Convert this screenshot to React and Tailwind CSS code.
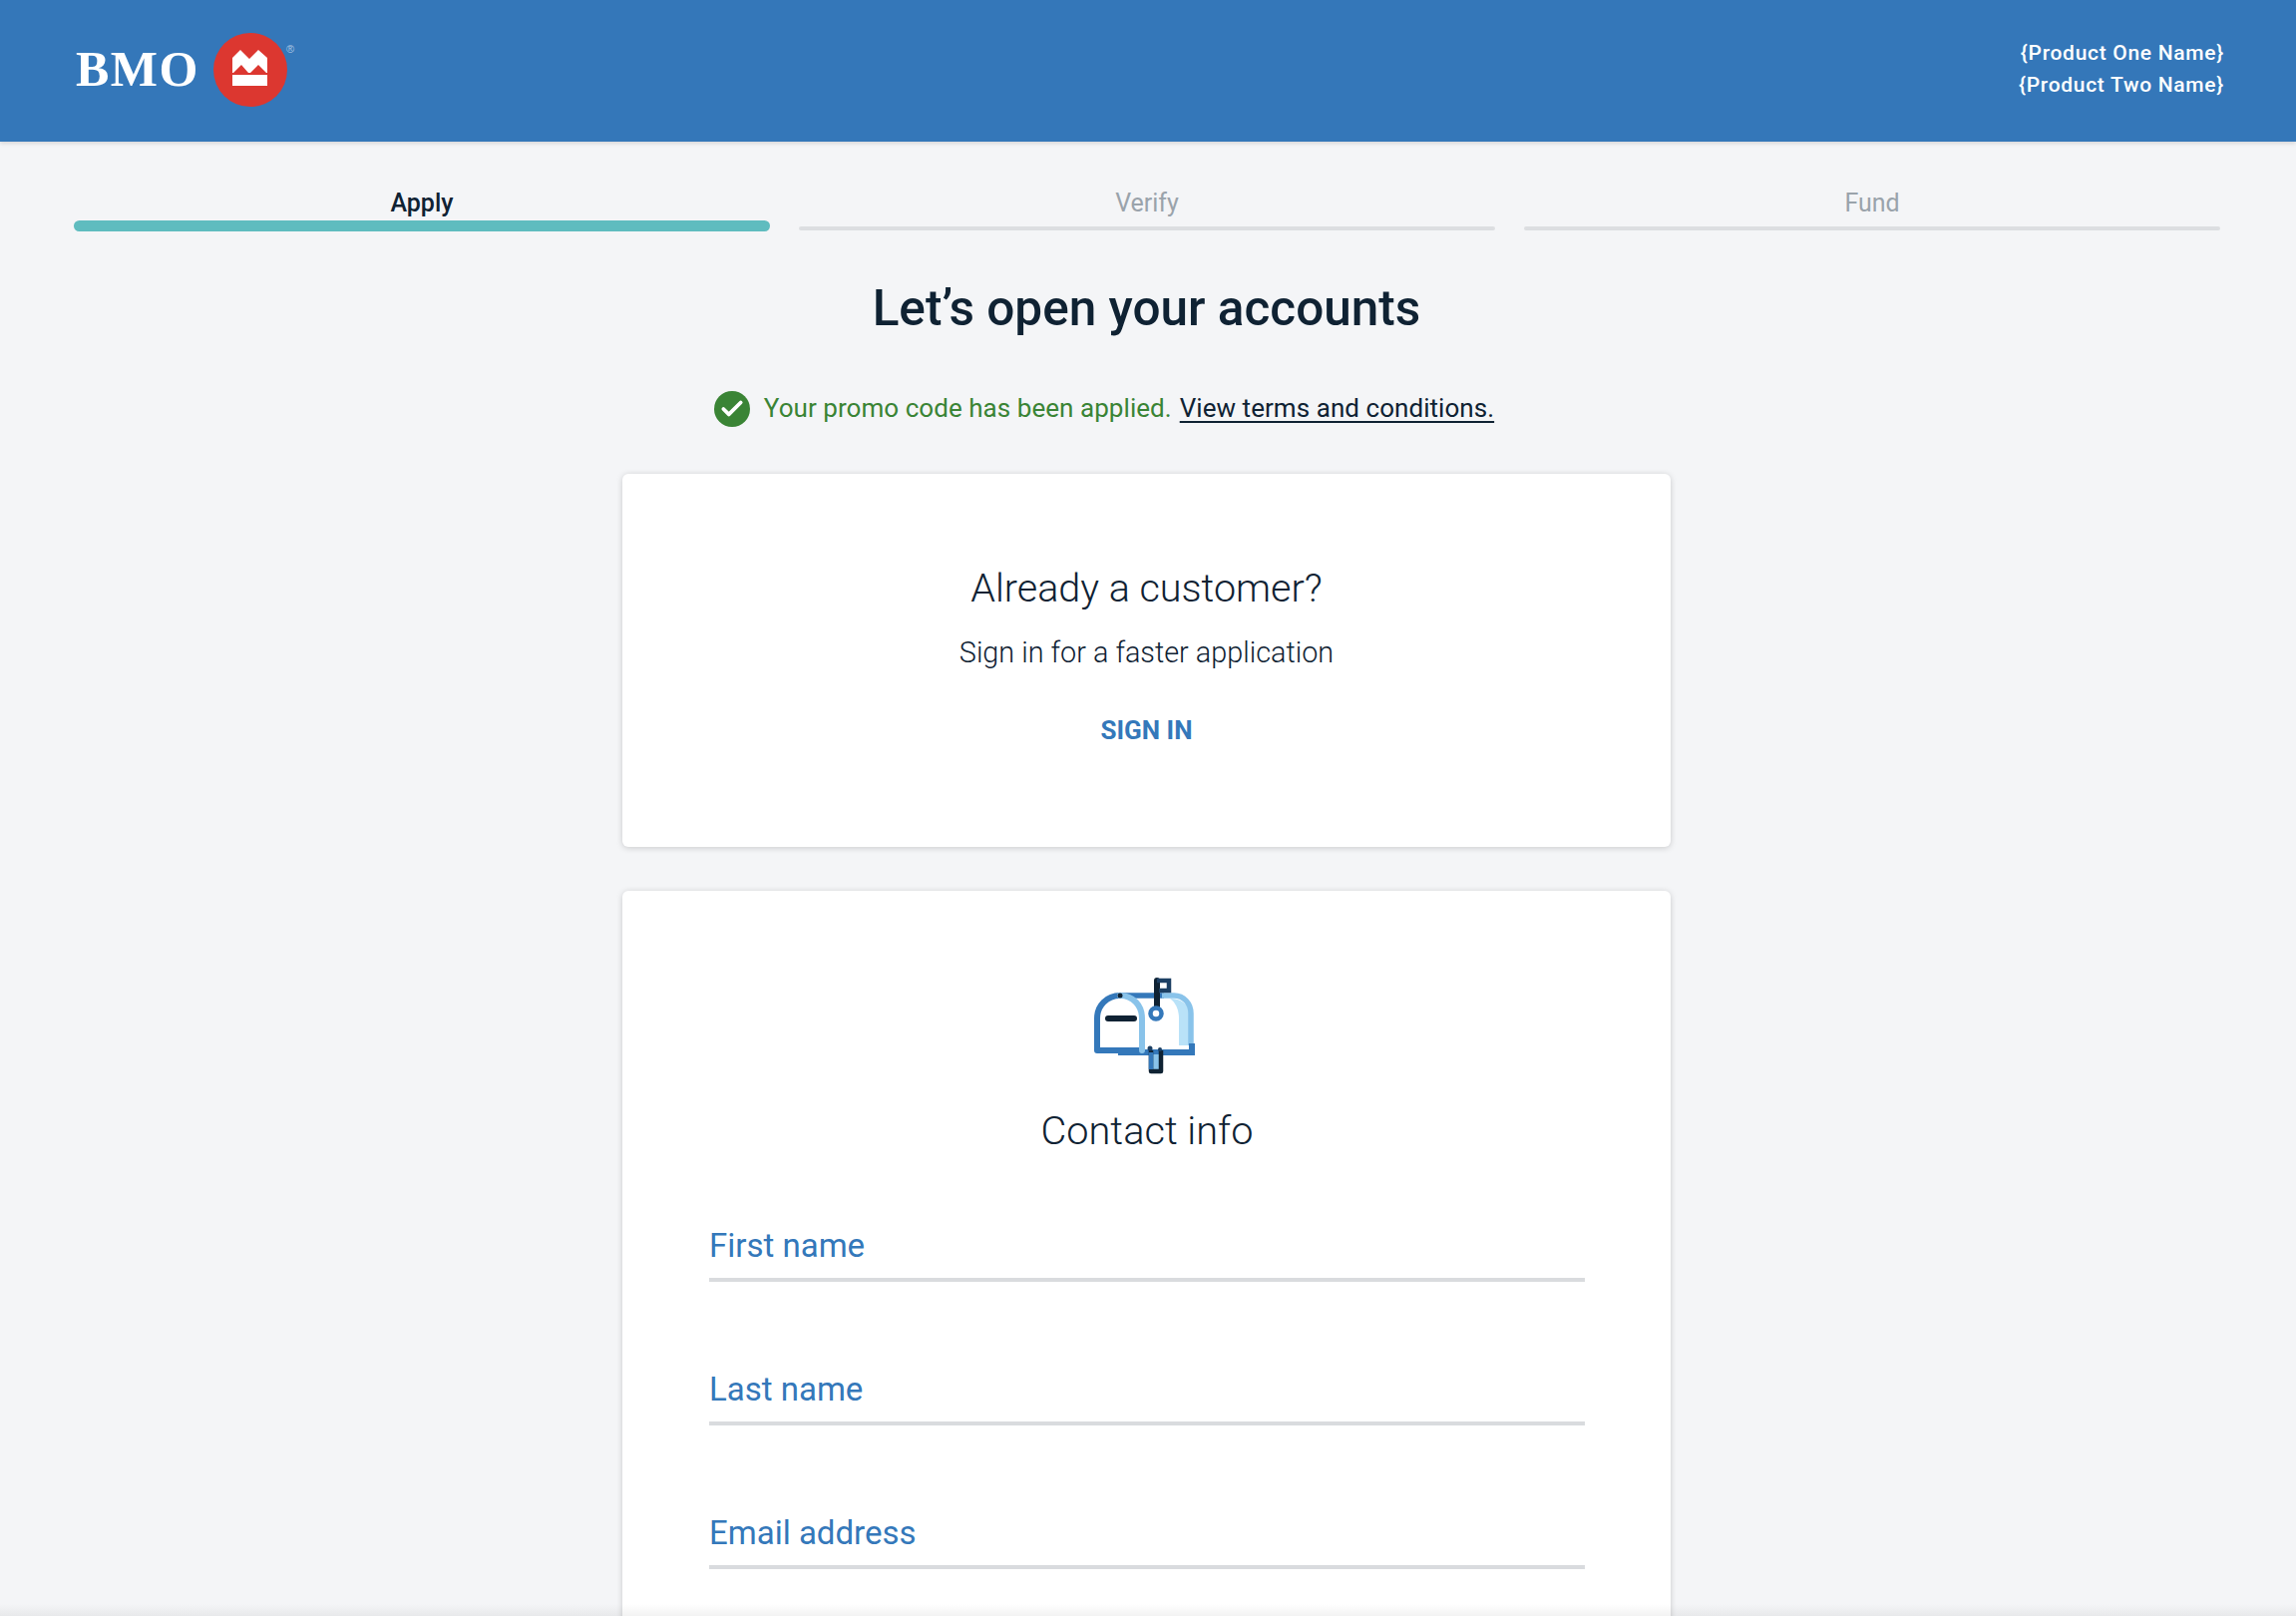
import { Check } from "lucide-react";

const Step = ({ label, active }) => (
  <div className="flex-1 flex flex-col items-center">
    <span className={`text-[25px] leading-[32px] ${active ? "font-medium text-[#0f2233]" : "text-[#9aa3ab]"}`}>{label}</span>
    {active ? (
      <div className="w-full h-[11px] mt-[1px] rounded-full bg-[#5fbcbf]" />
    ) : (
      <div className="w-full h-[4px] mt-[7px] rounded-full bg-[#dcdee1]" />
    )}
  </div>
);

const Field = ({ label }) => (
  <div className="border-b-[4px] border-[#d9dbde] h-[56px] mb-[88px] text-[33px] leading-[40px] text-[#3478ba]">{label}</div>
);

const CrownLogo = () => (
  <svg width="90" height="90" viewBox="0 0 90 90" className="shrink-0 ml-[9px]">
    <circle cx="42" cy="45" r="37" fill="#dc3730" />
    <path d="M24 61V33l8-8 9 9 9-9 9 8v28z" fill="#fff" />
    <path d="M25 48l8-8 7 8zM42 48l8-8 8 8z" fill="#dc3730" />
    <rect x="24" y="48" width="35" height="2" fill="#dc3730" />
    <text x="82" y="28" textAnchor="middle" fontSize="11" fill="#a9c6e4" fontFamily="Liberation Sans">®</text>
  </svg>
);

const Mailbox = () => (
  <svg width="120" height="110" viewBox="0 0 120 110" className="shrink-0">
    <path d="M83 30c7 5 9 13 9 20v27h10V44c0-8-8-14-19-14z" fill="#b9e2f8" />
    <path d="M33 27h44" stroke="#3478ba" strokeWidth="5.5" />
    <path d="M75 27h12c10 0 17 8 17 18v32" fill="none" stroke="#89c3ea" strokeWidth="5.5" />
    <path d="M33 27C20 27 10 37 10 50v32h45" fill="none" stroke="#3478ba" strokeWidth="6" strokeLinejoin="round" />
    <path d="M31 84h74v-9" fill="none" stroke="#3478ba" strokeWidth="6" />
    <path d="M33 27c13 0 22 10 22 23v32" fill="none" stroke="#89c3ea" strokeWidth="6" strokeLinecap="round" />
    <circle cx="33" cy="27" r="2.5" fill="#0f2233" />
    <path d="M21 50h26" stroke="#0f2233" strokeWidth="6" strokeLinecap="round" />
    <path d="M70 40V12" stroke="#0f2233" strokeWidth="6" strokeLinecap="round" />
    <path d="M70 12h12v10H72" fill="none" stroke="#1c3f63" strokeWidth="4.5" />
    <circle cx="69" cy="45" r="5.5" fill="#fff" stroke="#3478ba" strokeWidth="4.5" />
    <rect x="66" y="86" width="7" height="17" fill="#89c3ea" />
    <path d="M64 82v21h10V82" fill="none" stroke="#0f2233" strokeWidth="4.5" strokeLinejoin="round" />
    <path d="M64 84v17" stroke="#3478ba" strokeWidth="4.5" />
    <circle cx="63" cy="80" r="2.5" fill="#1c3f63" />
    <circle cx="73" cy="81" r="2" fill="#1c3f63" />
  </svg>
);

export default function App() {
  return (
    <div className="relative h-[1620px] overflow-hidden bg-[#f4f5f7] font-['Roboto',sans-serif]">
      <header className="h-[142px] bg-[#3477b9] shadow-[0_2px_4px_rgba(0,0,0,0.12)] flex items-center justify-between pl-[76px] pr-[72px]">
        <div className="flex items-center -mt-[2px]">
          <span className="font-['Liberation_Serif',serif] font-bold text-[50px] tracking-[1.5px] text-white -mt-[2px]">BMO</span>
          <CrownLogo />
        </div>
        <div className="text-right text-white font-medium text-[21px] leading-[32px] tracking-[0.7px] -mt-[4px]">
          <div>{"{Product One Name}"}</div>
          <div>{"{Product Two Name}"}</div>
        </div>
      </header>

      <div className="flex gap-[29px] pl-[74px] pr-[76px] pt-[46px]">
        <Step label="Apply" active />
        <Step label="Verify" />
        <Step label="Fund" />
      </div>

      <h1 className="mt-[45px] pr-[3px] text-center text-[49.5px] leading-[64px] font-medium text-[#0f2233]">Let’s open your accounts</h1>

      <div className="mt-[49px] pr-[88px] flex items-center justify-center text-[26px] leading-[36px] tracking-[0.05px]">
        <span className="w-[36px] h-[36px] rounded-full bg-[#3a8435] flex items-center justify-center mr-[14px] mt-[2px]">
          <Check size={26} strokeWidth={3.5} className="text-white" />
        </span>
        <span className="text-[#3a8435]">Your promo code has been applied.</span>
        <a className="ml-[8px] text-[#0f2233] underline decoration-2 underline-offset-4">View terms and conditions.</a>
      </div>

      <div className="mt-[47px] pr-[3px] flex flex-col items-center gap-[44px]">
        <section className="w-[1051px] h-[374px] bg-white rounded-[6px] shadow-[0_1px_6px_rgba(0,0,0,0.18)] flex flex-col items-center pt-[91px]">
          <h2 className="text-[39.5px] leading-[48px] font-light text-[#0f2233]">Already a customer?</h2>
          <p className="mt-[22px] text-[28.8px] leading-[36px] font-light text-[#0f2233]">Sign in for a faster application</p>
          <button className="mt-[44px] text-[26px] leading-[32px] font-bold text-[#3478ba]">SIGN IN</button>
        </section>

        <section className="w-[1051px] bg-white rounded-[6px] shadow-[0_1px_6px_rgba(0,0,0,0.18)] flex flex-col items-center pt-[78px] pl-[87px] pr-[86px] pb-[200px]">
          <Mailbox />
          <h2 className="mt-[29px] text-[39.7px] leading-[48px] font-light text-[#0f2233]">Contact info</h2>
          <div className="w-full mt-[71px]">
            <Field label="First name" />
            <Field label="Last name" />
            <Field label="Email address" />
          </div>
        </section>
      </div>

      {/* faint shade along the bottom edge */}
      <div className="absolute bottom-0 left-0 right-0 h-[12px] bg-linear-to-b from-transparent to-black/5" />
    </div>
  );
}
